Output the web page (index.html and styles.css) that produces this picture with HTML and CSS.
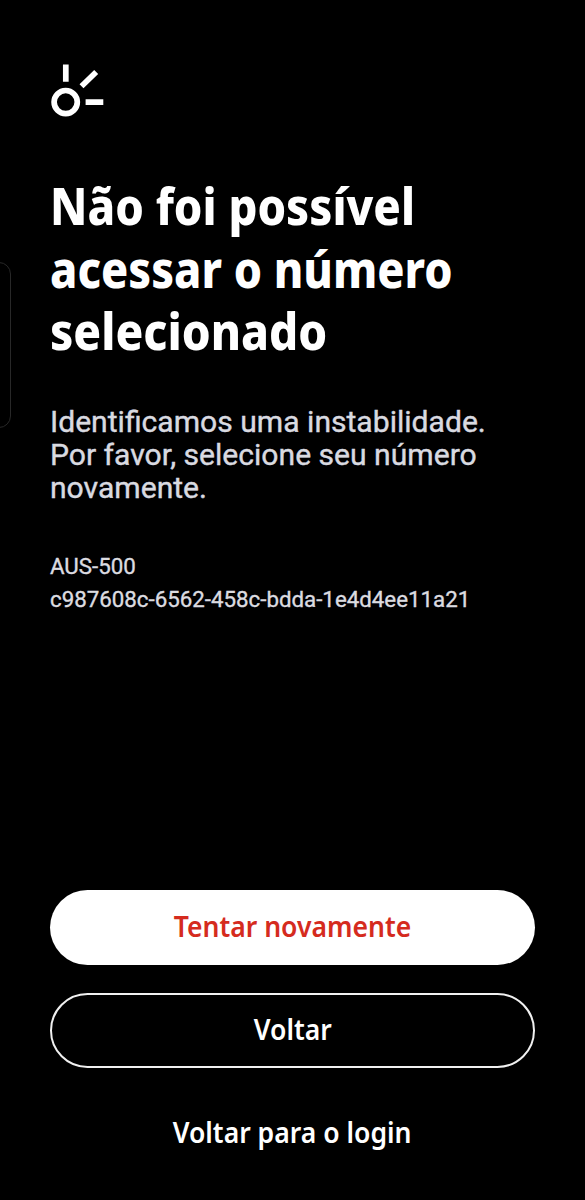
FILE: index.html
```html
<!DOCTYPE html>
<html lang="pt-BR">
<head>
<meta charset="utf-8">
<meta name="viewport" content="width=device-width">
<title>Não foi possível acessar</title>
<link rel="stylesheet" href="styles.css">
</head>
<body>
<main class="screen">
  <div class="edge-handle"></div>
  <svg class="logo" viewBox="0 0 54 54" fill="none" stroke="#fff" stroke-width="5.7">
    <circle cx="15.7" cy="38.1" r="11.6"/>
    <path d="M15.8.5v17.3M31.5 22.2 46.2 8M35.6 38.1H53.3"/>
  </svg>
  <h1 class="title"><span class="line t1">Não foi possível</span><span class="line t2">acessar o número</span><span class="line t3">selecionado</span></h1>
  <p class="message">Identificamos uma instabilidade.<br>Por favor, selecione seu número<br>novamente.</p>
  <p class="details">AUS-500<br>c987608c-6562-458c-bdda-1e4d4ee11a21</p>
  <div class="actions">
    <button class="button primary"><span>Tentar novamente</span></button>
    <button class="button outline"><span>Voltar</span></button>
    <button class="button plain"><span>Voltar para o login</span></button>
  </div>
</main>
</body>
</html>
```
FILE: styles.css
```css
* { box-sizing: border-box; }
body { margin: 0; background: #000; color: #fff; }
.screen {
  position: relative;
  display: flex;
  flex-direction: column;
  height: 1200px;
  padding: 64px 50px 29px;
  overflow: hidden;
}
.edge-handle {
  position: absolute;
  left: -19px;
  top: 262px;
  width: 30px;
  height: 166px;
  border: 1px solid #282828;
  border-radius: 12px;
}
.logo { width: 54px; height: 54px; flex: none; }
.title {
  margin: 56px 0 0;
  font: 800 51px/62.5px "Noto Sans", sans-serif;
}
.line { display: block; width: max-content; transform-origin: 0 50%; }
.t1 { transform: scaleX(.892); }
.t2 { transform: scaleX(.881); }
.t3 { transform: scaleX(.9); }
.message {
  margin: 43px 0 0;
  font: 400 30.1px/33.2px Roboto, sans-serif;
  -webkit-text-stroke: .4px #d9dae0;
  color: #d9dae0;
}
.details {
  margin: 45.5px 0 0;
  font: 400 22.3px/33px Roboto, sans-serif;
  -webkit-text-stroke: .35px #dcdce0;
  color: #dcdce0;
}
.actions { margin-top: auto; display: grid; gap: 28px; }
.button {
  height: 75px;
  padding: 0 0 4px;
  border: 0;
  border-radius: 38px;
  background: transparent;
  color: #fff;
  font: 600 28.5px/36px "Noto Sans", sans-serif;
}
.button span { display: inline-block; transform: scaleX(.932); }
.primary { background: #fff; color: #d52b1e; }
.outline { border: 2px solid #f0f0f0; }
```
